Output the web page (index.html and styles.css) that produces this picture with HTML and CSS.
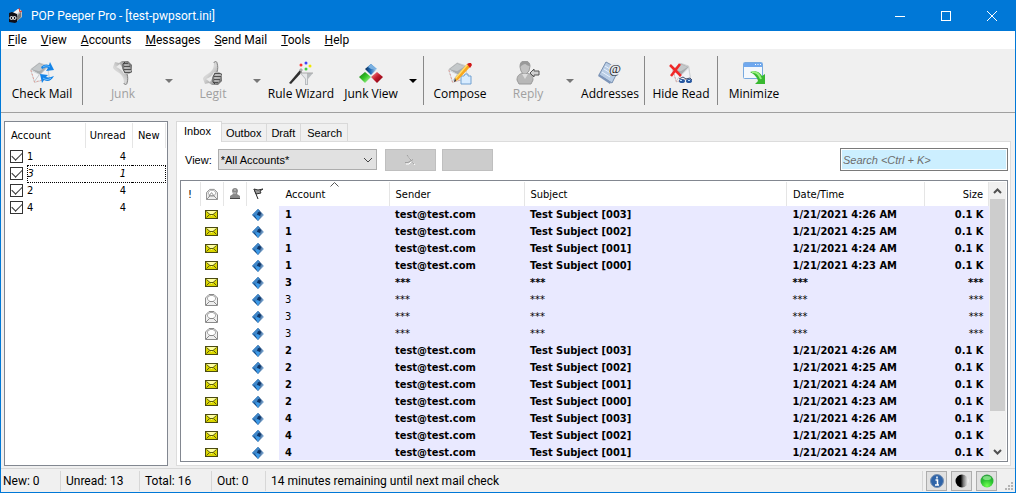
FILE: index.html
```html
<!DOCTYPE html>
<html lang="en">
<head>
    <meta charset="UTF-8">
    <meta name="viewport" content="width=device-width, initial-scale=1.0">
    <title>POP Peeper Pro - [test-pwpsort.ini]</title>
    <link rel="stylesheet" href="styles.css">
</head>
<body>

<!-- Shared icons and gradients -->
<svg class="defs" width="0" height="0" aria-hidden="true">
    <defs>
        <linearGradient id="gray" x1="0" y1="0" x2="1" y2="1">
            <stop offset="0" stop-color="#a0a0a0"/><stop offset="0.4" stop-color="#d8d8d8"/><stop offset="0.7" stop-color="#a8a8a8"/><stop offset="1" stop-color="#585858"/>
        </linearGradient>
        <linearGradient id="light" x1="0" y1="0" x2="1" y2="1">
            <stop offset="0" stop-color="#ffffff"/><stop offset="1" stop-color="#b4b8bc"/>
        </linearGradient>
        <linearGradient id="blue" x1="0" y1="0" x2="1" y2="0">
            <stop offset="0" stop-color="#0a2a50"/><stop offset="0.45" stop-color="#1d6ab8"/><stop offset="1" stop-color="#c0dcf4"/>
        </linearGradient>
        <linearGradient id="gemblue" x1="0" y1="0" x2="1" y2="0.4">
            <stop offset="0" stop-color="#a8d4f8"/><stop offset="0.3" stop-color="#1f5c9c"/><stop offset="0.6" stop-color="#0c3468"/><stop offset="1" stop-color="#8ab4dc"/>
        </linearGradient>
        <linearGradient id="red" x1="0" y1="0" x2="1" y2="1">
            <stop offset="0" stop-color="#ff9a9a"/><stop offset="0.5" stop-color="#c01828"/><stop offset="1" stop-color="#700010"/>
        </linearGradient>
        <linearGradient id="green" x1="0" y1="0" x2="1" y2="1">
            <stop offset="0" stop-color="#107010"/><stop offset="0.5" stop-color="#38c828"/><stop offset="1" stop-color="#d0ffc0"/>
        </linearGradient>
        <radialGradient id="orb" cx="0.5" cy="0.85" r="0.8">
            <stop offset="0" stop-color="#70ff50"/><stop offset="0.6" stop-color="#28c030"/><stop offset="1" stop-color="#30a040"/>
        </radialGradient>
        <linearGradient id="half" x1="0" y1="0" x2="1" y2="0">
            <stop offset="0.4" stop-color="#000000"/><stop offset="0.6" stop-color="#777777"/><stop offset="1" stop-color="#ffffff"/>
        </linearGradient>
    </defs>
    <symbol id="mail-new" viewBox="0 0 13 9">
        <rect x="0.5" y="0.5" width="12" height="8" fill="#dcd800" stroke="#4a4a10"/>
        <path d="M1 1h11L6.500 6z" fill="#ffffa0"/>
        <path d="M1.500 1.500L5 4.500h3L11.500 1.500M1.500 7.500L4.500 4.500M11.500 7.500L8.500 4.500" fill="none" stroke="#5c5c10"/>
    </symbol>
    <symbol id="mail-read" viewBox="0 0 13 13">
        <path d="M0.500 5L4 1.500h5L12.500 5v7.500H0.500z" fill="#eeeeee" stroke="#8a8a8a"/>
        <path d="M2.500 6.500V4.500L5 2.500h3l2.500 2v2L8 8.500H5z" fill="#ffffff" stroke="#a8a8a8"/>
        <path d="M1 12l3.500-3.500h4L12 12" fill="none" stroke="#8a8a8a"/>
    </symbol>
    <symbol id="gem" viewBox="0 0 12 12">
        <path d="M6 0l6 6-6 6-6-6z" fill="url(#gemblue)"/>
        <path d="M6 0l2 2-4 5-4-1z" fill="#3f86c8"/>
        <path d="M3 7l4-2 1 3-2 4z" fill="#3c9ae8"/>
        <path d="M6 3l3 1-1 3-3-1z" fill="#0c3468"/>
    </symbol>
    <symbol id="hand" viewBox="0 0 24 24">
        <path d="M2 18c0-2 3-4 6-6 3-2 5-5 5-10 0-2 3-2 3 0 1 3 1 6 0 9h2l3 2v7l-4 4-6 0-3-2-4 1z" fill="url(#gray)"/>
        <path d="M5 18c3-1 6-3 8-7l1 1-2 4-3 5z" fill="#ececec"/>
        <path d="M13 2c0-2 3-2 3 0 1 3 1 6 0 9" fill="none" stroke="#808080"/>
        <path d="M14 12l-2 4v5l2 2" fill="none" stroke="#404040"/>
        <path d="M14 12.500h5l2 1M13 15.500h7M13 18.500h6M13 21.500h4" fill="none" stroke="#505050"/>
        <path d="M15 14h5M14 17h5M14 20h4" stroke="#c8c8c8"/>
    </symbol>
    <symbol id="letter" viewBox="0 0 24 24">
        <path d="M1 8L10 1l9 3 2 14-16 4z" fill="url(#light)" stroke="#c8c8c8"/>
        <path d="M1 8l9-7 9 4-8 9z" fill="#a8acae"/>
        <path d="M2 8l8-6 8 3-8 5z" fill="#c4c8ca"/>
        <path d="M1 9l10 5 8-8 2 12-16 4z" fill="#f2f3f5" stroke="#d0d4d8"/>
        <path d="M5 21l5-7" stroke="#c0c4c8"/>
        <path d="M1 9l4 13 14-4" fill="none" stroke="#e49a90" stroke-dasharray="2 2"/>
    </symbol>
</svg>

<div class="window">
    <header class="titlebar">
        <svg class="app-icon" width="16" height="16" viewBox="0 0 16 16" aria-hidden="true">
            <path d="M4 5L10 1l4 2v6l-5 4-5 1z" fill="#bcbcbc"/>
            <path d="M5 5l5-4 3 1-5 5z" fill="#f4f4f4"/>
            <path d="M9 8l4-4v5l-4 4z" fill="#777777"/>
            <path d="M11 0l1 4 2-1" stroke="#e03020" fill="none"/>
            <path d="M1 5l3-1 5 2v8l-2 1-6-1z" fill="#101018"/>
            <circle cx="3.500" cy="10" r="1.500" fill="none" stroke="#ffffff"/>
            <circle cx="6.500" cy="10" r="1.500" fill="none" stroke="#ffffff"/>
        </svg>
        <h1>POP Peeper Pro - [test-pwpsort.ini]</h1>
        <div class="window-buttons">
            <button aria-label="Minimize window"><svg width="10" height="10"><path d="M0 5.500h10" stroke="#fff"/></svg></button>
            <button aria-label="Maximize window"><svg width="10" height="10"><rect x="0.5" y="0.5" width="9" height="9" fill="none" stroke="#fff"/></svg></button>
            <button aria-label="Close window"><svg width="10" height="10"><path d="M0 0l10 10M10 0L0 10" stroke="#fff"/></svg></button>
        </div>
    </header>

    <nav class="menu">
        <a href="#"><u>F</u>ile</a>
        <a href="#"><u>V</u>iew</a>
        <a href="#"><u>A</u>ccounts</a>
        <a href="#"><u>M</u>essages</a>
        <a href="#"><u>S</u>end Mail</a>
        <a href="#"><u>T</u>ools</a>
        <a href="#"><u>H</u>elp</a>
    </nav>

    <!-- Toolbar -->
    <div class="toolbar">
        <button class="tool wide">
            <svg width="24" height="24" viewBox="0 0 24 24">
                <use href="#letter" width="22" height="24"/>
                <path d="M11 6c3-3 6-3 8-2l1-3 4 8-8 1 2-3c-2-1-4 0-6 1z" fill="#1484e8"/>
                <path d="M24 15c-3 5-6 6-10 4l-2 3-2-9 8 1-2 2c3 1 5 0 8-1z" fill="#1484e8"/>
                <path d="M13 6c3-2 5-1 7 0M21 17c-3 2-5 2-8 0" stroke="#70c0ff" fill="none"/>
            </svg>
            <span>Check Mail</span>
        </button>
        <span class="separator"></span>
        <button class="tool wide" disabled>
            <svg class="flip" width="24" height="24"><use href="#hand"/></svg>
            <span>Junk</span>
        </button>
        <button class="drop" disabled aria-label="Junk options"></button>
        <button class="tool" disabled>
            <svg width="24" height="24"><use href="#hand"/></svg>
            <span>Legit</span>
        </button>
        <button class="drop" disabled aria-label="Legit options"></button>
        <button class="tool">
            <svg width="24" height="24" viewBox="0 0 24 24">
                <path d="M0 22l11-13 2 2L2 23z" fill="#303030"/>
                <path d="M10 9l2-2 2 2-2 2z" fill="#aaaaaa"/>
                <path d="M11 12h13l-5 6v6h-3v-6z" fill="#b8bcbf"/>
                <path d="M12 12h6v11h-1v-5z" fill="#e6e8ea"/>
                <path d="M11 12h13" stroke="#aaaaaa"/>
                <circle cx="12" cy="4" r="1.500" fill="#ff3030"/>
                <circle cx="17" cy="2" r="1.500" fill="#4040f8"/>
                <circle cx="21" cy="5" r="1.500" fill="#f0e800"/>
                <circle cx="17" cy="8" r="1.500" fill="#40d040"/>
            </svg>
            <span>Rule Wizard</span>
        </button>
        <button class="tool narrow">
            <svg width="24" height="24" viewBox="0 0 24 24">
                <path d="M12 3l6 5-6 6-6-6z" fill="url(#blue)"/>
                <path d="M12 3l6 5h-6l-3-2z" fill="#7ab0e0"/>
                <path d="M6 11l6 5-6 6-6-6z" fill="url(#green)"/>
                <path d="M18 11l6 5-6 6-6-6z" fill="url(#red)"/>
            </svg>
            <span>Junk View</span>
        </button>
        <button class="drop" aria-label="Junk View options"></button>
        <span class="separator"></span>
        <button class="tool narrow">
            <svg width="24" height="24" viewBox="0 0 24 24">
                <use href="#letter" width="22" height="24"/>
                <path d="M13 15h3l1-2h3v2h3v8H13z" fill="#d8ecff" stroke="#70a0d0"/>
                <path d="M7 17l1 3 2-1L22 6l-3-3z" fill="#f8a820"/>
                <path d="M7 17L19 3l1 1L8 18z" fill="#ffe070"/>
                <path d="M19 3l2-1h2l1 2-2 3z" fill="#d01818"/>
                <path d="M7 17l1 3-2 1z" fill="#202020"/>
            </svg>
            <span>Compose</span>
        </button>
        <button class="tool narrow" disabled>
            <svg width="24" height="24" viewBox="0 0 24 24">
                <path d="M1 19c0-4 2-6 6-7h4c4 1 6 3 6 7l-2 4H3z" fill="#b8b8b8" stroke="#9a9a9a"/>
                <path d="M4 6c0-5 2-6 5-6s5 2 5 5l-1 5-3 3H7L5 10z" fill="#c2c2c2" stroke="#9c9c9c"/>
                <path d="M4 6c0-5 2-6 5-6s5 2 5 5c-3 0-4-2-5-2s-3 1-5 3z" fill="#999999"/>
                <path d="M6 13l3 5 3-5" fill="#dddddd"/>
                <path d="M14 12l4-4v2h5v4h-5v2z" fill="#d0d0d0" stroke="#555555"/>
            </svg>
            <span>Reply</span>
        </button>
        <button class="drop" disabled aria-label="Reply options"></button>
        <button class="tool slim">
            <svg width="24" height="24" viewBox="0 0 24 24">
                <path d="M8 1l13 7-7 14-13-8z" fill="#b8cce4" stroke="#7890b0"/>
                <path d="M8 1L1 13l12 8-1 2L0 15z" fill="#7c94b8"/>
                <path d="M7 5l8 5M6 8l8 5M4 11l8 5" stroke="#e8f2ff"/>
                <circle cx="17" cy="8" r="6" fill="#e6eaf0"/>
                <text class="at" x="11" y="12">@</text>
            </svg>
            <span>Addresses</span>
        </button>
        <span class="separator"></span>
        <button class="tool narrow">
            <svg width="24" height="24" viewBox="0 0 24 24">
                <use href="#letter" x="3" width="21" height="24"/>
                <path d="M1 4l11 11M11 3L2 15" stroke="#f02828" stroke-width="2.500"/>
                <path d="M10 18l4-2 3 2 4-1 2 2" fill="none" stroke="#405070"/>
                <ellipse cx="13" cy="20" rx="3" ry="2" fill="#2858a0"/>
                <ellipse cx="20" cy="20" rx="3" ry="2" fill="#2858a0"/>
                <path d="M11 19.500h2M19 19.500h2" stroke="#b8e0ff"/>
            </svg>
            <span>Hide Read</span>
        </button>
        <span class="separator"></span>
        <button class="tool narrow">
            <svg width="24" height="24" viewBox="0 0 24 24">
                <rect x="1.500" y="1.500" width="19" height="16" rx="1" fill="#f4f8fc" stroke="#78aae0"/>
                <path d="M2 2h18v4H2z" fill="#70a8ee"/>
                <path d="M13 3.500h1M15.500 3.500h1M18 3.500h1" stroke="#fff"/>
                <path d="M8 11c7-2 10 1 12 4l3-2v10H13l3-3c-1-4-3-6-8-9z" fill="#38b830"/>
                <path d="M10 11c5 0 7 2 9 7" fill="none" stroke="#98f080" stroke-width="2"/>
            </svg>
            <span>Minimize</span>
        </button>
    </div>

    <main>
        <!-- Accounts list -->
        <section class="accounts">
            <table>
                <colgroup><col class="col-tick"><col class="col-name"><col class="col-unread"><col></colgroup>
                <thead>
                    <tr><th class="name" colspan="2">Account</th><th class="unread">Unread</th><th class="new">New</th></tr>
                </thead>
                <tbody>
                    <tr><td class="tick"><input type="checkbox" id="acc1" checked></td><td><label for="acc1">1</label></td><td class="unread">4</td><td></td></tr>
                    <tr class="focused"><td class="tick"><input type="checkbox" id="acc3" checked></td><td><label for="acc3">3</label></td><td class="unread">1</td><td></td></tr>
                    <tr><td class="tick"><input type="checkbox" id="acc2" checked></td><td><label for="acc2">2</label></td><td class="unread">4</td><td></td></tr>
                    <tr><td class="tick"><input type="checkbox" id="acc4" checked></td><td><label for="acc4">4</label></td><td class="unread">4</td><td></td></tr>
                </tbody>
            </table>
        </section>

        <!-- Mailbox -->
        <section class="mailbox">
            <div class="tabs">
                <button class="active">Inbox</button>
                <button>Outbox</button>
                <button>Draft</button>
                <button>Search</button>
            </div>
            <div class="pane">
                <div class="filters">
                    <label for="view">View:</label>
                    <select id="view"><option>*All Accounts*</option></select>
                    <button class="filter" disabled aria-label="Clear filter">
                        <svg width="12" height="12"><path d="M2 10h3l3-3M4 2l7 9" stroke="#fff" fill="none"/><path d="M1 8.500h3l5-3M3 1l7 9" stroke="#a0a0a0" fill="none"/></svg>
                    </button>
                    <button class="filter" disabled aria-label="Apply filter"></button>
                    <input class="search" type="text" placeholder="Search &lt;Ctrl + K&gt;" aria-label="Search">
                </div>
                <div class="list">
                    <div class="messages">
                        <table>
                            <thead>
                                <tr>
                                    <th class="c-mark">!</th>
                                    <th class="c-icon"><svg width="12" height="12" viewBox="0 0 13 13"><use href="#mail-read"/><path d="M3 9l3-4 3 4" fill="none" stroke="#888"/></svg></th>
                                    <th class="c-icon"><svg width="12" height="12"><path d="M3 3c0-4 6-4 6 0L8 6l3 2v3H1V8l3-2z" fill="#888"/><path d="M5 2h2M4 5h3" stroke="#ccc"/><path d="M1 10.500h10" stroke="#444"/></svg></th>
                                    <th class="c-flag"><svg width="12" height="12"><path d="M1 1l4 10" stroke="#222"/><path d="M1 1l4 1 5-1-3 2 1 2-5 1z" fill="#999" stroke="#333"/></svg></th>
                                    <th class="c-account">Account<svg class="sort" width="9" height="5"><path d="M0.500 4.500l4-4 4 4" fill="none" stroke="#555"/></svg></th>
                                    <th class="c-sender">Sender</th>
                                    <th>Subject</th>
                                    <th class="c-date">Date/Time</th>
                                    <th class="c-size">Size</th>
                                </tr>
                            </thead>
                            <tbody id="rows"></tbody>
                        </table>
                    </div>
                    <div class="scrollbar">
                        <button aria-label="Scroll up"><svg width="9" height="6"><path d="M1 5l3.500-3.500L8 5" fill="none" stroke="#505050" stroke-width="2"/></svg></button>
                        <div class="track"><div class="thumb"></div></div>
                        <button aria-label="Scroll down"><svg width="9" height="6"><path d="M1 1l3.500 3.500L8 1" fill="none" stroke="#505050" stroke-width="2"/></svg></button>
                    </div>
                </div>
            </div>
        </section>
    </main>

    <footer class="status">
        <span class="s-new">New: 0</span>
        <span class="s-unread">Unread: 13</span>
        <span class="s-total">Total: 16</span>
        <span class="s-out">Out: 0</span>
        <span class="s-next">14 minutes remaining until next mail check</span>
        <div class="status-buttons">
            <button aria-label="Information"><svg width="14" height="14"><circle cx="7" cy="7" r="6.500" fill="#2f64a8" stroke="#7890b0"/><path d="M7 2.500v2M5.500 6h2v5M5 11h4" stroke="#fff" stroke-width="1.500" fill="none"/></svg></button>
            <button aria-label="Contrast"><svg width="14" height="14"><circle cx="7" cy="7" r="6.500" fill="url(#half)"/></svg></button>
            <button aria-label="Online"><svg width="14" height="14"><circle cx="7" cy="7" r="6.500" fill="url(#orb)"/><ellipse cx="7" cy="4" rx="4" ry="2" fill="#a0f0a0" opacity="0.7"/></svg></button>
        </div>
        <svg class="grip" width="9" height="9"><path d="M6 0h2v2H6zM3 3h2v2H3zM6 3h2v2H6zM0 6h2v2H0zM3 6h2v2H3zM6 6h2v2H6z" fill="#b4b4b4"/></svg>
    </footer>
</div>

<script>
    // Messages in an account, newest first
    function inbox(account) {
        return [3, 2, 1, 0].map(n => ({
            account: account,
            sender: 'test@test.com',
            subject: `Test Subject [00${n}]`,
            date: `1/21/2021 4:2${n + 3} AM`,
            size: '0.1 K',
            unread: true
        }));
    }

    // Messages of a locked account are masked
    function masked(account, unread) {
        return { account, sender: '***', subject: '***', date: '***', size: '***', unread };
    }

    const messages = [
        ...inbox(1),
        masked(3, true), masked(3, false), masked(3, false), masked(3, false),
        ...inbox(2),
        ...inbox(4).slice(0, 3)
    ];

    document.getElementById('rows').innerHTML = messages.map(m => `
        <tr class="${m.unread ? 'is-unread' : ''}">
            <td></td>
            <td class="c-icon">${m.unread
                ? '<svg width="13" height="9"><use href="#mail-new"/></svg>'
                : '<svg width="13" height="13"><use href="#mail-read"/></svg>'}</td>
            <td></td>
            <td class="c-flag"><svg width="12" height="12"><use href="#gem"/></svg></td>
            <td>${m.account}</td>
            <td>${m.sender}</td>
            <td>${m.subject}</td>
            <td>${m.date}</td>
            <td class="c-size">${m.size}</td>
        </tr>`).join('');
</script>

</body>
</html>
```
FILE: styles.css
```css
* {
    box-sizing: border-box;
}
body {
    margin: 0;
    font-family: "Open Sans", sans-serif;
    font-size: 12px;
    color: #000;
}
button, select, input {
    font: inherit;
    color: inherit;
    margin: 0;
    padding: 0;
    border: none;
    border-radius: 0;
    background: none;
}
svg {
    display: block;
}
.defs {
    position: absolute;
}
.window {
    display: flex;
    flex-direction: column;
    height: 100vh;
    border: 1px solid #0078d7;
    background-color: #f0f0f0;
}

/* Title bar and menu */
.titlebar, .menu, .status {
    font-family: Roboto, "Open Sans", sans-serif;
}
.titlebar {
    display: flex;
    align-items: center;
    height: 30px;
    padding-left: 7px;
    background-color: #0078d7;
    color: #fff;
}
.titlebar h1 {
    flex: 1;
    margin: 0 0 0 7px;
    font-size: 12px;
    font-weight: normal;
}
.window-buttons {
    display: flex;
    height: 100%;
}
.window-buttons button {
    display: grid;
    place-items: center;
    width: 46px;
}
.menu {
    display: flex;
    align-items: center;
    gap: 14px;
    height: 18px;
    padding: 0 7px;
    background-color: #fff;
}
.menu a {
    color: #000;
    text-decoration: none;
}

/* Toolbar */
.toolbar {
    display: flex;
    height: 64px;
    padding: 7px 3px;
    border-bottom: 1px solid #a0a0a0;
}
.tool {
    display: flex;
    flex-direction: column;
    align-items: center;
    width: 72px;
    padding-top: 5px;
    line-height: 17px;
    white-space: nowrap;
}
.tool.wide {
    width: 76px;
}
.tool.narrow {
    width: 68px;
}
.tool.slim {
    width: 64px;
}
.tool:disabled {
    color: #a0a0a0;
}
.flip {
    transform: scaleY(-1);
}
.at {
    font: 13px "Liberation Serif", serif;
    fill: #222;
}
.drop {
    display: grid;
    place-items: center;
    width: 16px;
}
.drop::before {
    content: "";
    border: 4px solid transparent;
    border-top-color: #000;
    border-bottom: none;
}
.drop:disabled::before {
    border-top-color: #777;
}
.separator {
    width: 1px;
    margin: 0 2px;
    background-color: #888;
}

main {
    display: flex;
    flex: 1;
    gap: 8px;
    min-height: 0;
    padding: 8px 4px 2px 3px;
}
table {
    width: 100%;
    border-collapse: collapse;
    table-layout: fixed;
}
th, td {
    padding: 0;
    text-align: left;
    white-space: nowrap;
}
th {
    font-weight: normal;
}

/* Accounts list */
.accounts {
    width: 164px;
    padding: 1px;
    border: 1px solid #828790;
    background-color: #fff;
    font: 11px "DejaVu Sans Condensed", "DejaVu Sans", sans-serif;
}
.col-tick {
    width: 21px;
}
.col-name {
    width: 58px;
}
.col-unread {
    width: 47px;
}
.accounts th {
    height: 25px;
    border-right: 1px solid #e5e5e5;
}
.accounts td {
    height: 17px;
}
.accounts .name {
    padding-left: 5px;
}
.accounts .unread {
    padding-right: 6px;
    text-align: right;
}
.accounts .new {
    text-align: center;
}
.accounts .tick {
    padding-left: 4px;
}
.accounts input {
    appearance: none;
    display: grid;
    place-items: center;
    width: 13px;
    height: 13px;
    border: 1px solid #333;
}
.accounts input:checked::before {
    content: "";
    width: 9px;
    height: 5px;
    margin-bottom: 3px;
    border: solid #333;
    border-width: 0 0 1px 1px;
    transform: rotate(-45deg);
}
.focused {
    font-style: italic;
}
.focused td {
    border: dotted #000;
    border-width: 1px 0;
}
.focused .tick {
    border: none;
    border-right: 1px dotted #000;
}
.focused td:last-child {
    border-right-width: 1px;
}

/* Mailbox */
.mailbox {
    display: flex;
    flex: 1;
    flex-direction: column;
    min-width: 0;
    font: 11px "Liberation Sans", Arial, sans-serif;
}
.tabs {
    display: flex;
    align-items: flex-end;
    height: 20px;
}
.tabs button {
    height: 18px;
    padding: 0 5px 0 4px;
    border: 1px solid #d9d9d9;
    border-width: 1px 1px 0 0;
}
.tabs button:last-child {
    padding-left: 6px;
}
.tabs .active {
    height: 21px;
    margin-bottom: -1px;
    padding: 0 10px 2px 7px;
    border-left-width: 1px;
    background-color: #fff;
    z-index: 1;
}
.pane {
    display: flex;
    flex: 1;
    flex-direction: column;
    gap: 9px;
    min-height: 0;
    padding: 6px 2px 3px 3px;
    border: 1px solid #dcdcdc;
    background-color: #fff;
}
.filters {
    display: flex;
    align-items: center;
    gap: 6px;
    height: 23px;
    padding-left: 5px;
}
.filters select {
    appearance: none;
    width: 159px;
    height: 21px;
    margin-right: 2px;
    padding-left: 2px;
    border: 1px solid #adadad;
    background: #e1e1e1 url("data:image/svg+xml,%3Csvg xmlns='http://www.w3.org/2000/svg' width='10' height='6'%3E%3Cpath d='M1 1l4 4 4-4' fill='none' stroke='%23444'/%3E%3C/svg%3E") no-repeat right 3px center;
}
.filter {
    display: grid;
    place-items: center;
    width: 51px;
    height: 22px;
    border: 1px solid #bfbfbf;
    background-color: #ccc;
}
.search {
    width: 168px;
    height: 23px;
    margin-left: auto;
    padding: 0 2px;
    border: 1px solid #7a7a7a;
    outline: 1px solid #fff;
    outline-offset: -2px;
    background-color: #ccefff;
    font-style: italic;
}
.search::placeholder {
    color: #6d6d6d;
}
.list {
    display: flex;
    flex: 1;
    min-height: 0;
    padding: 1px;
    border: 1px solid #828790;
}
.messages {
    flex: 1;
    min-width: 0;
    overflow: hidden;
    font: 11px "DejaVu Sans Condensed", "DejaVu Sans", sans-serif;
}
.messages th {
    height: 24px;
    padding-left: 6px;
    border-right: 1px solid #e5e5e5;
}
.messages td {
    height: 17px;
    padding-left: 6px;
}
.messages td:nth-child(n+5) {
    background-color: #e9e9ff;
}
.messages .is-unread {
    font-weight: bold;
}
.messages .c-mark {
    width: 18px;
}
.messages .c-icon {
    width: 23px;
    padding-left: 5px;
}
.messages .c-flag {
    width: 33px;
    padding-left: 6px;
}
.messages th.c-flag {
    border-right-color: #fff;
}
.c-account {
    position: relative;
    width: 110px;
}
.sort {
    position: absolute;
    top: 0;
    left: 46%;
}
.c-sender {
    width: 135px;
}
.c-date {
    width: 138px;
}
.messages .c-size {
    width: 64px;
    padding-right: 5px;
    text-align: right;
}
.scrollbar {
    display: flex;
    flex-direction: column;
    width: 17px;
    background-color: #f0f0f0;
}
.scrollbar button {
    display: grid;
    place-items: center;
    height: 17px;
}
.track {
    flex: 1;
    padding: 0 1px;
}
.thumb {
    height: 87%;
    background-color: #cdcdcd;
}

/* Status bar */
.status {
    display: flex;
    align-items: center;
    height: 24px;
    border-top: 1px solid #d7d7d7;
}
.status span {
    height: 20px;
    padding-left: 5px;
    border-right: 1px solid #d7d7d7;
    line-height: 20px;
    white-space: nowrap;
}
.status .s-new {
    width: 60px;
    padding-left: 2px;
}
.s-unread {
    width: 79px;
}
.s-total {
    width: 72px;
}
.s-out {
    width: 54px;
}
.s-next {
    flex: 1;
}
.status-buttons {
    display: flex;
    gap: 4px;
    padding: 0 8px 0 3px;
}
.status-buttons button {
    display: grid;
    place-items: center;
    width: 21px;
    height: 20px;
    border: 1px solid #adadad;
    background-color: #e1e1e1;
}
.grip {
    align-self: flex-end;
    margin: 0 1px 1px 0;
}
```
